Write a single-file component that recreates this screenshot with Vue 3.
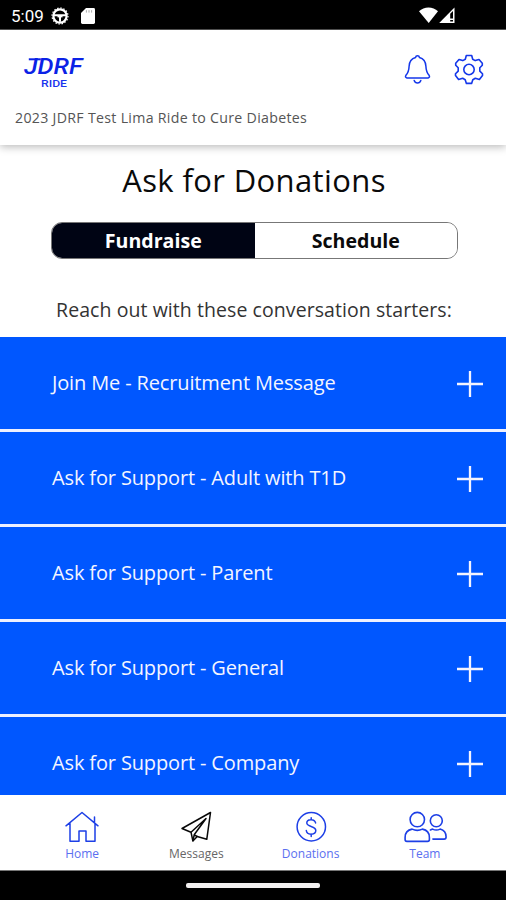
<script setup>
const starters = [
  'Join Me - Recruitment Message',
  'Ask for Support - Adult with T1D',
  'Ask for Support - Parent',
  'Ask for Support - General',
  'Ask for Support - Company',
]
</script>

<template>
  <div class="screen">
    <div class="status">
      <span class="time">5:09</span>
      <svg class="wheel" width="18" height="18" viewBox="0 0 18 18" fill="none" stroke="#fff">
        <circle cx="9" cy="9" r="6.6" stroke-width="2.2" />
        <circle cx="9" cy="9" r="8" stroke-width="1.2" stroke-dasharray="1.5 1.64" />
        <path d="M3 8.3h12M9 9.2v5.5" stroke-width="2" />
        <path d="M6.5 9.2h5" stroke-width="2.4" />
      </svg>
      <svg class="card" width="14" height="16" viewBox="0 0 14 16">
        <path d="M5 0h7.6Q14 0 14 1.4v13.2Q14 16 12.6 16H1.4Q0 16 0 14.6V5z" fill="#fff" />
        <path d="M5.4 2.2v2.4M8 2.2v2.4M10.6 2.2v2.4" stroke="#aaa" stroke-width="1" />
      </svg>
      <span class="space"></span>
      <svg class="signals" width="37" height="17" viewBox="0 0 37 17">
        <path d="M0 4.2C5-.9 14-.9 19 4.2L9.7 16z" fill="#fff" />
        <path d="M35.5.5V16H20.2z" fill="#fff" />
        <path d="M31.2 6.8l2.8-2.9v7.7h-2.8zM31.2 13H34v1.5h-2.8z" fill="#000" />
      </svg>
    </div>

    <header class="header">
      <div class="bar">
        <div class="logo">
          <svg width="64" height="42" viewBox="0 0 64 42">
            <text class="brand" x="1" y="24.8" textLength="58.5" lengthAdjust="spacingAndGlyphs">JDRF</text>
            <path d="M5.8 10.3h12" stroke="#0b22e6" stroke-width="2" />
            <text class="sub" x="18" y="38.3" textLength="26" lengthAdjust="spacingAndGlyphs">RIDE</text>
          </svg>
        </div>
        <div class="actions">
          <svg width="27" height="31" viewBox="0 0 27 31" fill="none" stroke="#1437ea" stroke-width="1.5" stroke-linecap="round" stroke-linejoin="round">
            <path d="M11.6 3.4Q11.8 1.7 13.5 1.7T15.4 3.4C19.7 4.5 21.7 7.7 21.9 12.2C22.1 17.2 23 19 25.1 21.3Q26.3 23.5 24.1 23.9H2.9Q.7 23.5 1.9 21.3C4 19 4.9 17.2 5.1 12.2C5.3 7.7 7.3 4.5 11.6 3.4Z" />
            <path d="M10.2 26.5Q11 29 13.5 29T16.8 26.5" />
          </svg>
          <svg width="30" height="31" viewBox="0 0 30 31" fill="none" stroke="#1437ea" stroke-width="1.6" stroke-linejoin="round">
            <path d="M12.3 1.5H17.7L18.7 5.2L21.2 6.6L25 5.5L28.3 9.2V11.2L25.8 13.8V17.1L28.5 19.8V21.5L25.4 25.5L21.3 24.3L18.8 25.8L17.6 29.4H12.4L11.2 25.8L8.7 24.3L4.6 25.5L1.5 21.5V19.8L4.2 17.1V13.8L1.7 11.2V9.2L5 5.5L8.8 6.6L11.3 5.2Z" />
            <circle cx="15" cy="15.5" r="5.2" />
          </svg>
        </div>
      </div>
      <div class="event"><span>2023 JDRF Test Lima Ride to Cure Diabetes</span></div>
    </header>

    <main class="content">
      <h1>Ask for Donations</h1>
      <div class="tabs">
        <button class="tab active">Fundraise</button>
        <button class="tab">Schedule</button>
      </div>
      <p class="intro">Reach out with these conversation starters:</p>
      <div class="list">
        <div v-for="item in starters" :key="item" class="row">
          <span>{{ item }}</span>
          <svg width="26" height="26" viewBox="0 0 26 26" stroke="#f4f3ff" stroke-width="2.3">
            <path d="M0 13h26M13 0v26" />
          </svg>
        </div>
      </div>
    </main>

    <nav class="nav">
      <div class="item">
        <svg width="44" height="34" viewBox="0 0 44 34" fill="none" stroke="#1d3fe6" stroke-width="1.5" stroke-linejoin="round" stroke-linecap="round">
          <path d="M6 14.8L22 1.5L38 14.8M34.5 11.5V6M10 12.5V30.2H19V20H26V30.2H35V12.5" />
        </svg>
        <span>Home</span>
      </div>
      <div class="item current">
        <svg width="44" height="34" viewBox="0 0 44 34" fill="none" stroke="#080808" stroke-width="1.5" stroke-linejoin="round">
          <path d="M36.5 1.5L8 17.5L17 21.2L18.9 30L23.2 25.5L32.8 28.2Z" />
          <path d="M17 21.2L32 7.5L20.2 23.8L18.9 30M20.2 23.8L23.2 25.5" />
        </svg>
        <span>Messages</span>
      </div>
      <div class="item">
        <svg width="44" height="34" viewBox="0 0 44 34" fill="none" stroke="#1d3fe6" stroke-width="1.5" stroke-linecap="round">
          <circle cx="22.3" cy="15.7" r="14.2" />
          <path d="M26.6 11.9C25.5 7.2 17.6 8 17.8 12C18 16.1 26.8 14.8 26.8 19.5C26.8 24 18 24.7 17.3 19.5M22.2 6.7V8.7M22.2 23V25.5" />
        </svg>
        <span>Donations</span>
      </div>
      <div class="item">
        <svg width="44" height="34" viewBox="0 0 44 34" fill="none" stroke="#1d3fe6" stroke-width="1.6" stroke-linejoin="round" stroke-linecap="round">
          <g transform="translate(.6 -.6)">
            <circle cx="13.7" cy="9.2" r="7.2" />
            <path d="M8.5 18.7C4 19.5 1.5 22.5 1.5 27V29.2Q1.5 31 3.3 31H24Q25.8 31 25.8 29.2V27C25.8 22.5 23.2 19.5 18.8 18.7Q13.7 21.2 8.5 18.7Z" />
            <circle cx="32.7" cy="10.4" r="6" />
            <path d="M26.8 19.6L29 18.7Q32.7 20.6 36.5 18.7C41 20 42.5 22.5 42.5 26.5Q42.5 28.7 40.5 28.7H29.3" />
          </g>
        </svg>
        <span>Team</span>
      </div>
    </nav>
    <div class="system"><div class="handle"></div></div>
  </div>
</template>

<style>
body {
  margin: 0;
}
</style>

<style scoped>
.screen {
  width: 506px;
  height: 900px;
  display: flex;
  flex-direction: column;
  overflow: hidden;
  background: #fff;
  font-family: "Open Sans", "Noto Sans", sans-serif;
}
.status {
  flex: none;
  box-sizing: border-box;
  height: 30px;
  padding: 2px 50px 0 11px;
  display: flex;
  align-items: center;
  background: #000;
  border-bottom: 1px solid #555;
  color: #fff;
}
.time {
  width: 40px;
  font: 400 17px/28px Roboto, sans-serif;
}
.card {
  margin-left: 12px;
}
.space {
  flex: 1;
}
.header {
  flex: none;
  position: relative;
  box-sizing: border-box;
  height: 115px;
  background: #fff;
  box-shadow: 0 2px 8px rgba(0, 0, 0, 0.27);
}
.bar {
  box-sizing: border-box;
  height: 60px;
  display: flex;
  justify-content: space-between;
  align-items: flex-start;
  padding: 19px 22px 0 23px;
}
.logo svg {
  display: block;
}
.brand {
  font: italic 500 21.5px Roboto, sans-serif;
  fill: #0b22e6;
}
.sub {
  font: 500 9.8px Roboto, sans-serif;
  fill: #1a35ee;
}
.actions {
  display: flex;
  gap: 23px;
  padding-top: 5px;
}
.event {
  margin: 17px 0 0 15px;
  font-size: 14.2px;
  line-height: 21px;
  letter-spacing: 0.29px;
  color: #555;
  white-space: nowrap;
}
.content {
  flex: 1;
  min-height: 0;
  overflow: hidden;
  display: flex;
  flex-direction: column;
}
h1 {
  margin: 14px 0 0;
  padding-left: 2px;
  font-size: 31px;
  line-height: 42px;
  font-weight: 500;
  text-align: center;
  color: #0a0a0a;
  letter-spacing: 0.38px;
}
.tabs {
  flex: none;
  box-sizing: border-box;
  width: 407px;
  height: 37px;
  margin: 21px 0 0 51px;
  display: flex;
  border: 1px solid #777;
  border-radius: 11px;
  overflow: hidden;
}
.tab {
  flex: 1;
  border: 0;
  padding: 0;
  background: #fff;
  color: #0a0a0a;
  font: 700 19.6px/35px "Open Sans", sans-serif;
}
.tab.active {
  background: #000414;
  color: #fff;
}
.intro {
  margin: 36px 0 0;
  padding-left: 2px;
  font-size: 19.5px;
  line-height: 30px;
  letter-spacing: 0.07px;
  text-align: center;
  color: #333;
}
.list {
  margin-top: 12px;
}
.row {
  box-sizing: border-box;
  height: 95px;
  padding: 2px 23px 0 52px;
  display: flex;
  align-items: center;
  justify-content: space-between;
  background: #0057ff;
  border-bottom: 3px solid #eef0ff;
  color: #f4f5ff;
  font-size: 20px;
  letter-spacing: -0.14px;
}
.row span {
  padding-bottom: 3px;
}
.nav {
  flex: none;
  box-sizing: border-box;
  height: 76px;
  padding: 16px 24px 0 25px;
  display: flex;
  background: #fff;
  border-bottom: 1px solid #777;
}
.item {
  flex: 1;
  display: flex;
  flex-direction: column;
  align-items: center;
  font-size: 12px;
  line-height: 17px;
  color: #5a6ff0;
}
.item.current {
  color: #666;
}
.system {
  flex: none;
  height: 29px;
  display: flex;
  align-items: center;
  justify-content: center;
  background: #000;
}
.handle {
  width: 134px;
  height: 5px;
  border-radius: 2px;
  background: #f2f0f0;
}
</style>
